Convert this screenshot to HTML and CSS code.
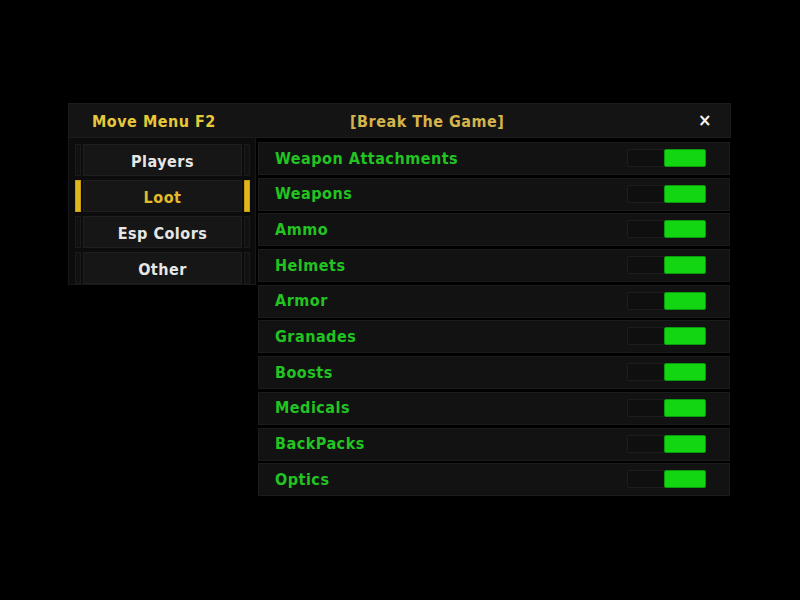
FILE: index.html
```html
<!DOCTYPE html>
<html>
<head>
<meta charset="utf-8">
<link rel="stylesheet" href="styles.css">
</head>
<body>
<div class="window">
  <div class="header">
    <span class="title">Move Menu F2</span>
    <span class="brand">[Break The Game]</span>
    <span class="close">×</span>
  </div>
  <div class="main">
    <div class="sidebar">
      <div class="tab"><span class="mark"></span><span class="label">Players</span><span class="mark"></span></div>
      <div class="tab active"><span class="mark"></span><span class="label">Loot</span><span class="mark"></span></div>
      <div class="tab"><span class="mark"></span><span class="label">Esp Colors</span><span class="mark"></span></div>
      <div class="tab"><span class="mark"></span><span class="label">Other</span><span class="mark"></span></div>
    </div>
    <div class="list">
      <div class="row"><span class="name">Weapon Attachments</span><span class="toggle"><span class="knob"></span></span></div>
      <div class="row"><span class="name">Weapons</span><span class="toggle"><span class="knob"></span></span></div>
      <div class="row"><span class="name">Ammo</span><span class="toggle"><span class="knob"></span></span></div>
      <div class="row"><span class="name">Helmets</span><span class="toggle"><span class="knob"></span></span></div>
      <div class="row"><span class="name">Armor</span><span class="toggle"><span class="knob"></span></span></div>
      <div class="row"><span class="name">Granades</span><span class="toggle"><span class="knob"></span></span></div>
      <div class="row"><span class="name">Boosts</span><span class="toggle"><span class="knob"></span></span></div>
      <div class="row"><span class="name">Medicals</span><span class="toggle"><span class="knob"></span></span></div>
      <div class="row"><span class="name">BackPacks</span><span class="toggle"><span class="knob"></span></span></div>
      <div class="row"><span class="name">Optics</span><span class="toggle"><span class="knob"></span></span></div>
    </div>
  </div>
</div>
</body>
</html>
```
FILE: styles.css
```css
html, body {
  margin: 0;
  padding: 0;
  background: #000;
  height: 100%;
}
body {
  font-family: "DejaVu Sans Condensed", "DejaVu Sans", sans-serif;
  font-weight: bold;
  font-size: 16px;
  letter-spacing: 0.5px;
}
.window {
  margin: 103px 0 0 68px;
  width: 663px;
}
.header {
  height: 35px;
  box-sizing: border-box;
  background: #141414;
  border: 1px solid #1c1c1c;
  display: flex;
  align-items: center;
  position: relative;
  padding-left: 23px;
}
.title {
  color: #e6c83a;
  margin-top: 2px;
}
.brand {
  color: #d4b44c;
  position: absolute;
  left: 281px;
  top: 8px;
}
.close {
  color: #f2f2f2;
  position: absolute;
  left: 629px;
  top: 5px;
  font-size: 18px;
}
.main {
  display: flex;
  align-items: flex-start;
}
.sidebar {
  width: 188px;
  height: 147px;
  box-sizing: border-box;
  background: #0c0c0c;
  border: 1px solid #181818;
  border-top: none;
  padding: 6px 0 0 6px;
  display: flex;
  flex-direction: column;
  gap: 4px;
}
.tab {
  display: flex;
  height: 32px;
  gap: 2px;
}
.mark {
  width: 6px;
  background: #111;
  border: 1px solid #1b1b1b;
  box-sizing: border-box;
}
.label {
  width: 159px;
  background: #161616;
  border: 1px solid #1e1e1e;
  box-sizing: border-box;
  color: #e6e6e6;
  display: flex;
  align-items: center;
  justify-content: center;
  padding-top: 2px;
}
.tab.active .label {
  color: #e2bb2a;
}
.tab.active .mark {
  background: #e0b61e;
  border-color: #c79d10;
}
.list {
  margin: 4px 0 0 2px;
  width: 472px;
  display: flex;
  flex-direction: column;
  gap: 2.7px;
}
.row {
  height: 33px;
  box-sizing: border-box;
  background: #121212;
  border: 1px solid #1b1b1b;
  display: flex;
  align-items: center;
  justify-content: space-between;
  padding: 0 23px 1px 16px;
}
.name {
  color: #21c421;
}
.toggle {
  width: 79px;
  height: 18px;
  box-sizing: border-box;
  background: #0f0f0f;
  border: 1px solid #1d1d1d;
  border-radius: 2px;
  display: flex;
  justify-content: flex-end;
}
.knob {
  width: 40px;
  margin: -1px -1px -1px 0;
  background: #12d612;
  border: 1px solid #0a9a0a;
  border-radius: 2px;
}
```
